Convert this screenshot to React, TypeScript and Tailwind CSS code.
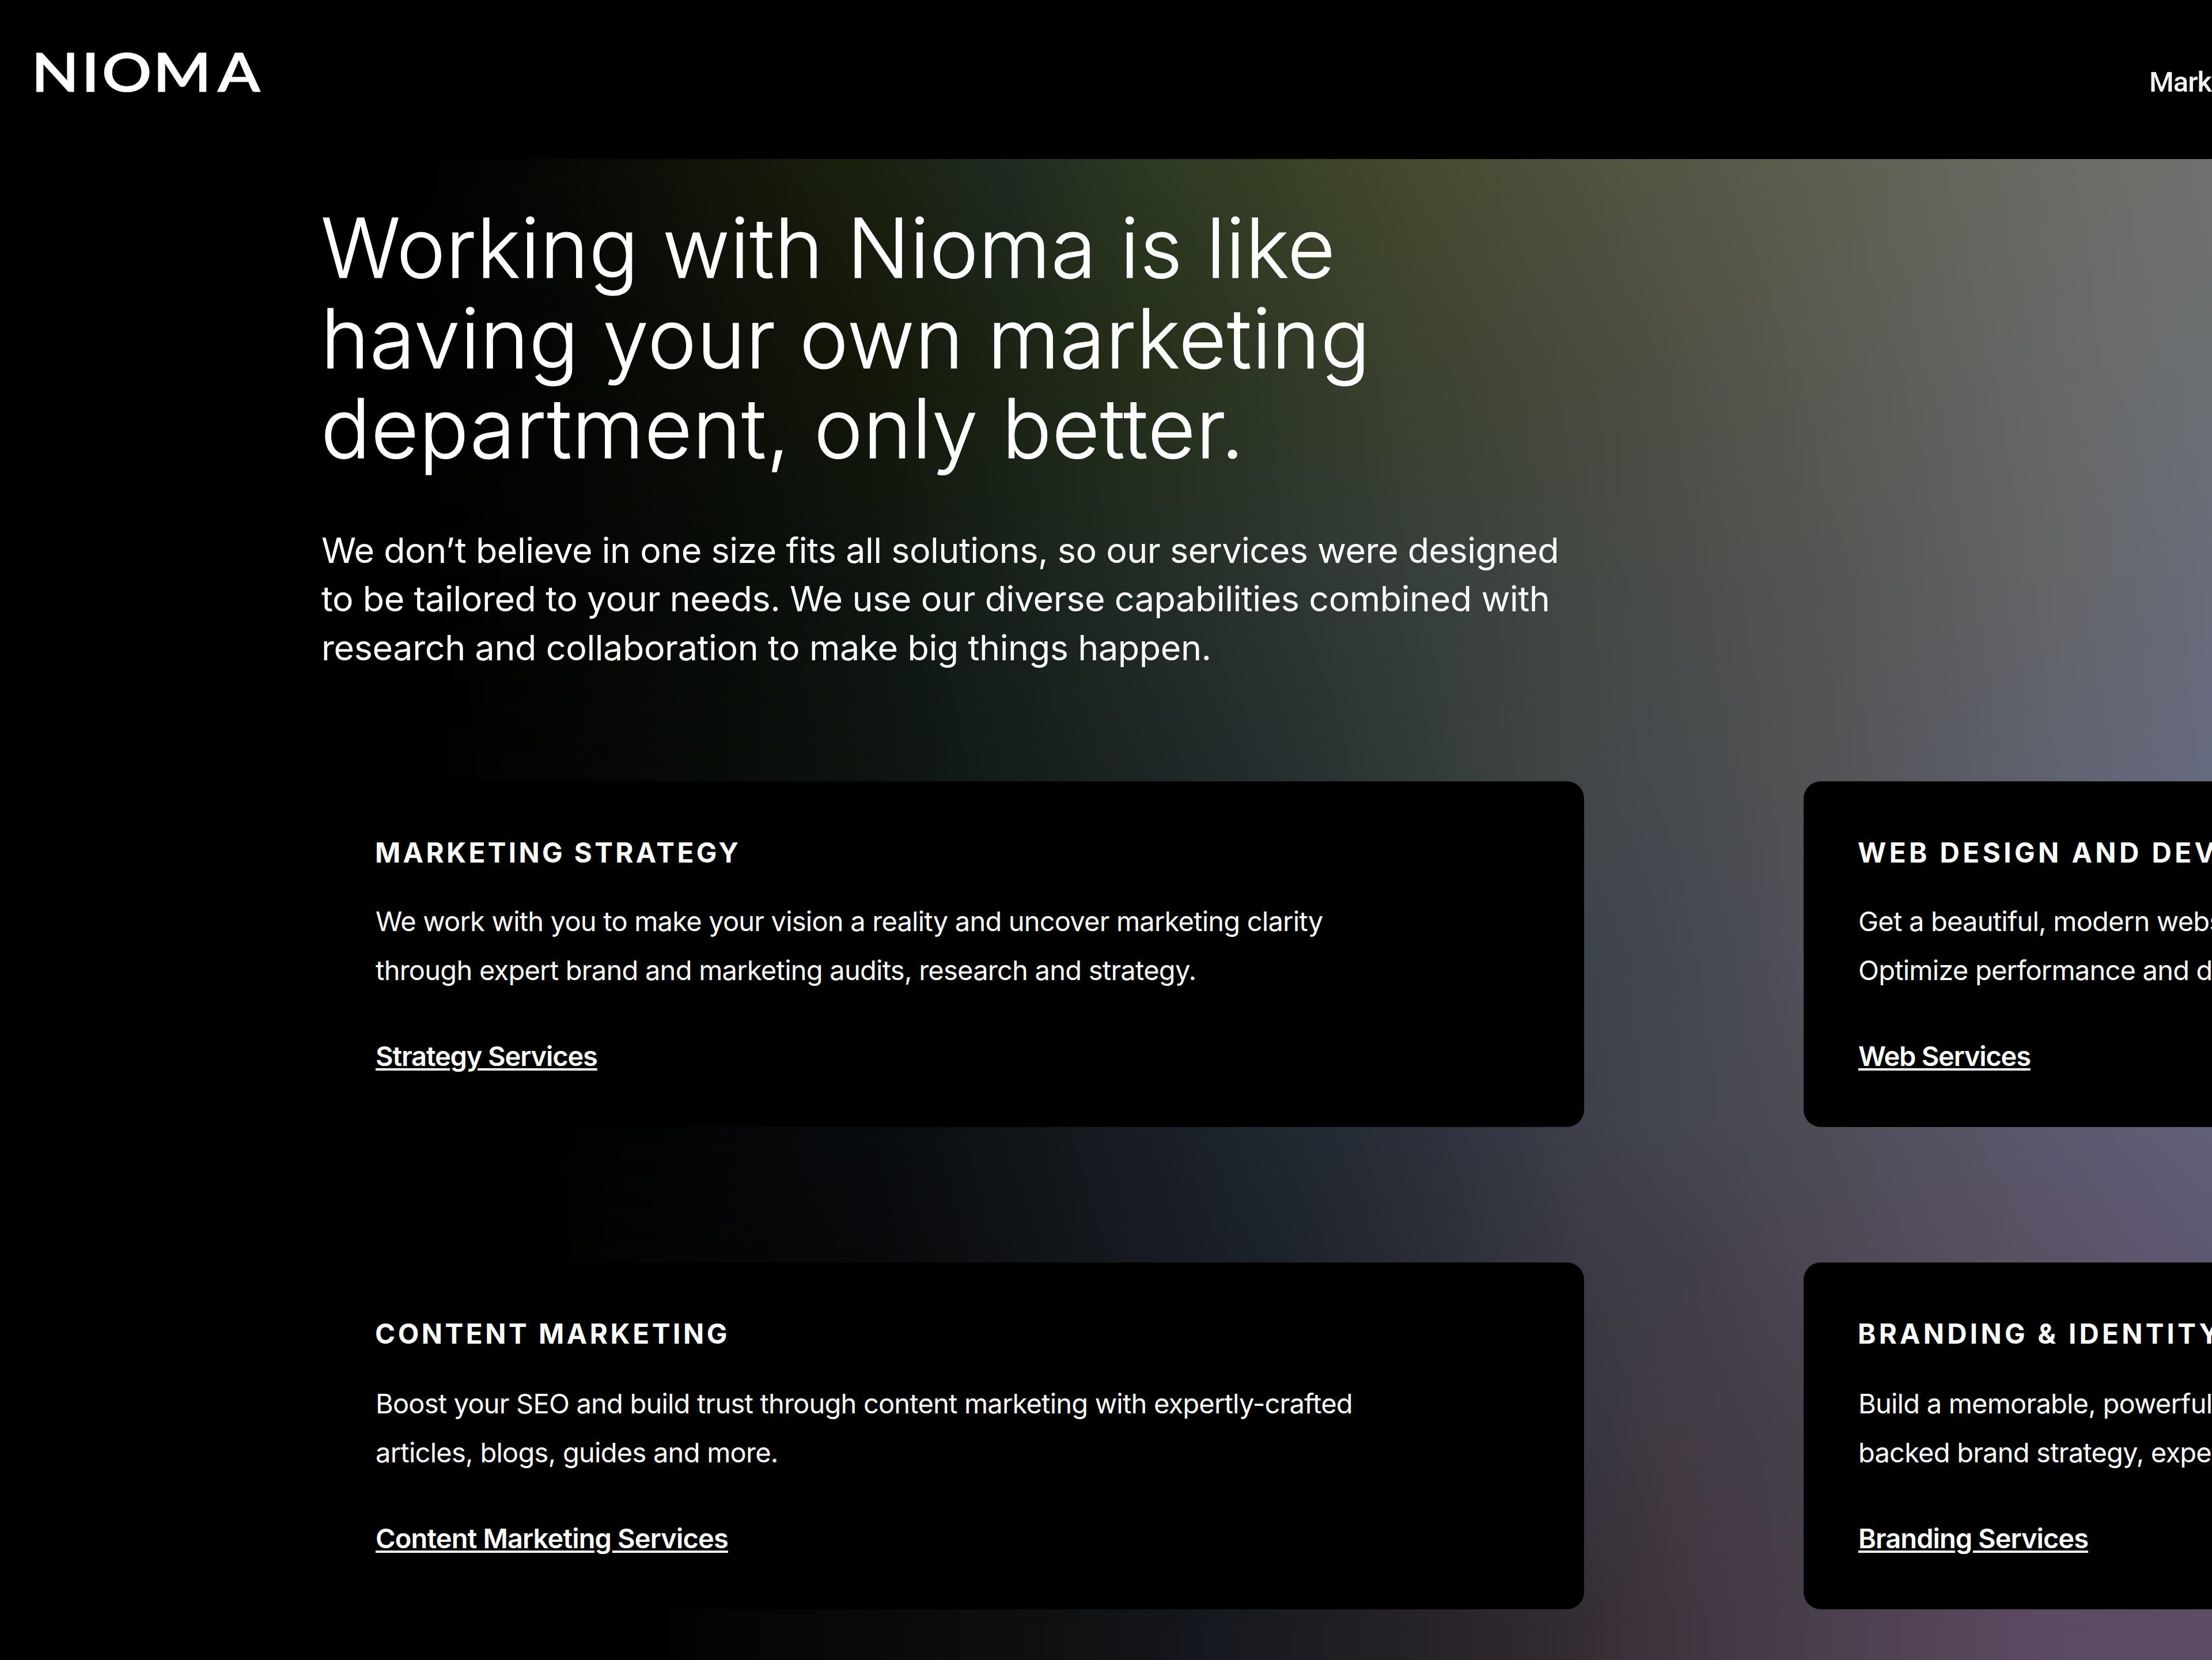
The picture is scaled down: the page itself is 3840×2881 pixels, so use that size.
type Line = { text: string; track: string };
type Service = { title: Line; body: Line[]; link: Line; spacing: string };

const headline: Line[] = [
  { text: "Working with Nioma is like", track: "tracking-[0.65px]" },
  { text: "having your own marketing", track: "tracking-[0.82px]" },
  { text: "department, only better.", track: "tracking-[0.8px]" },
];

const intro: Line[] = [
  { text: "We don’t believe in one size fits all solutions, so our services were designed", track: "tracking-[-0.49px]" },
  { text: "to be tailored to your needs. We use our diverse capabilities combined with", track: "tracking-[-0.44px]" },
  { text: "research and collaboration to make big things happen.", track: "tracking-[-0.4px]" },
];

const services: Service[] = [
  {
    title: { text: "MARKETING STRATEGY", track: "tracking-[4.36px]" },
    body: [
      { text: "We work with you to make your vision a reality and uncover marketing clarity", track: "tracking-[-0.79px]" },
      { text: "through expert brand and marketing audits, research and strategy.", track: "tracking-[-0.75px]" },
    ],
    link: { text: "Strategy Services", track: "tracking-[-1.12px]" },
    spacing: "mt-[47px]",
  },
  {
    title: { text: "WEB DESIGN AND DEV", track: "tracking-[5.45px]" },
    body: [
      { text: "Get a beautiful, modern webs", track: "tracking-[-0.78px]" },
      { text: "Optimize performance and d", track: "tracking-[-0.78px]" },
    ],
    link: { text: "Web Services", track: "tracking-[-1.2px]" },
    spacing: "mt-[47px]",
  },
  {
    title: { text: "CONTENT MARKETING", track: "tracking-[4.55px]" },
    body: [
      { text: "Boost your SEO and build trust through content marketing with expertly-crafted", track: "tracking-[-0.8px]" },
      { text: "articles, blogs, guides and more.", track: "tracking-[-0.74px]" },
    ],
    link: { text: "Content Marketing Services", track: "tracking-[-0.84px]" },
    spacing: "mt-[49px]",
  },
  {
    title: { text: "BRANDING & IDENTITY", track: "tracking-[5.25px]" },
    body: [
      { text: "Build a memorable, powerful", track: "tracking-[-0.78px]" },
      { text: "backed brand strategy, expe", track: "tracking-[-0.78px]" },
    ],
    link: { text: "Branding Services", track: "tracking-[-0.95px]" },
    spacing: "mt-[49px]",
  },
];

/* Rows of the backdrop: each has its height in the section and colour stops across it. */
const rows: { y: number; stops: [string, number][] }[] = [
  { y: 0, stops: [["#000000", 600], ["#020202", 740], ["#080a06", 1000], ["#12160a", 1240], ["#1b210f", 1500], ["#1f2b22", 1750], ["#2e3a22", 2000], ["#374026", 2200], ["#454a2f", 2450], ["#525440", 2800], ["#5f6052", 3200], ["#6b6c66", 3600], ["#70726f", 3840]] },
  { y: 364, stops: [["#000000", 600], ["#020202", 740], ["#060704", 1000], ["#0c0f08", 1240], ["#131709", 1500], ["#1b2414", 1750], ["#26301a", 2000], ["#2e3825", 2200], ["#3c432f", 2450], ["#4b4c40", 2800], ["#5b5b54", 3200], ["#686a6a", 3600], ["#6c6f72", 3840]] },
  { y: 724, stops: [["#000000", 640], ["#010101", 740], ["#050604", 1000], ["#080c08", 1240], ["#0e150f", 1500], ["#18221a", 1750], ["#222e26", 2000], ["#2b352f", 2200], ["#363f3a", 2450], ["#464a46", 2800], ["#565755", 3200], ["#656769", 3600], ["#686c7a", 3840]] },
  { y: 1074, stops: [["#000000", 700], ["#020202", 800], ["#050604", 1000], ["#080c08", 1240], ["#0d140f", 1500], ["#151d1b", 1750], ["#1d2626", 2000], ["#252e2f", 2200], ["#323a39", 2450], ["#404646", 2700], ["#454a4e", 2860], ["#505152", 3100], ["#616472", 3600], ["#666a7e", 3840]] },
  { y: 1384, stops: [["#000000", 850], ["#0a0d0e", 1500], ["#1b2227", 2000], ["#3e444b", 2760], ["#43474f", 2900], ["#50505a", 3130], ["#5e5c70", 3600], ["#64647c", 3840]] },
  { y: 1684, stops: [["#000000", 900], ["#020202", 960], ["#040505", 1200], ["#080b0e", 1500], ["#101315", 1700], ["#191e26", 2000], ["#20272f", 2200], ["#2b303a", 2450], ["#3e404a", 2750], ["#44464f", 2900], ["#4c4c54", 3130], ["#5a566a", 3500], ["#625f79", 3840]] },
  { y: 1914, stops: [["#000000", 960], ["#030302", 1000], ["#07080a", 1500], ["#111416", 1800], ["#171b23", 2000], ["#1c2229", 2200], ["#292c34", 2450], ["#3b3b45", 2750], ["#433f4a", 2950], ["#4d4652", 3130], ["#5a5063", 3500], ["#5f5872", 3840]] },
  { y: 2224, stops: [["#000000", 1080], ["#111216", 1900], ["#38363f", 2750], ["#423a43", 2900], ["#463f4a", 3130], ["#5b4c62", 3500], ["#5e516c", 3840]] },
  { y: 2550, stops: [["#000000", 1140], ["#030303", 1180], ["#080908", 1500], ["#0f0f0f", 1800], ["#15181e", 2100], ["#252227", 2450], ["#322a31", 2700], ["#3f353f", 2900], ["#483e4b", 3130], ["#5b4860", 3500], ["#5e4b66", 3840]] },
];

function Backdrop() {
  return (
    <div className="absolute inset-0" aria-hidden>
      {rows.map((row, i) => {
        const mask = i === 0 ? undefined : `linear-gradient(to bottom, transparent ${rows[i - 1].y}px, black ${row.y}px)`;
        return (
          <div
            key={row.y}
            className="absolute inset-0"
            style={{
              backgroundImage: `linear-gradient(to right, ${row.stops.map(([c, x]) => `${c} ${x}px`).join(", ")})`,
              maskImage: mask,
            }}
          />
        );
      })}
    </div>
  );
}

function Logo() {
  return (
    <svg className="h-[276px] w-[520px]" viewBox="0 0 520 276" aria-label="NIOMA">
      <text
        x="46.9 121.9 152.3 229.2 325.6"
        y="159"
        transform="scale(1.16 1)"
        fill="#ffffff"
        stroke="#ffffff"
        strokeWidth="0.9"
        className="font-['Lato',sans-serif] text-[93px] font-semibold"
      >
        NIOMA
      </text>
    </svg>
  );
}

function ServiceCard({ service }: { service: Service }) {
  return (
    <article className="h-full rounded-[30px] bg-black pl-[95px] pt-[94.5px]">
      <h2 className={`-ml-[1px] text-[47.5px] font-bold leading-[60px] ${service.title.track}`}>{service.title.text}</h2>
      <p className={`text-[47px] leading-[84.5px] ${service.spacing}`}>
        {service.body.map((line) => (
          <span key={line.text} className={`block ${line.track}`}>{line.text}</span>
        ))}
      </p>
      <a
        href="#"
        className={`mt-[77px] inline-block text-[47px] font-semibold leading-[60px] underline decoration-[4px] underline-offset-[4px] ${service.link.track}`}
      >
        {service.link.text}
      </a>
    </article>
  );
}

export default function App() {
  return (
    <div className="flex h-[2881px] w-[3840px] flex-col overflow-hidden whitespace-nowrap bg-black font-['Inter',sans-serif] text-white">
      <header className="flex h-[276px] shrink-0 justify-between bg-black">
        <Logo />
        <nav className="w-[109px] overflow-hidden pt-[113px]">
          <a href="#" className="font-['Roboto',sans-serif] text-[49px] font-medium leading-[60px] tracking-[-1px] text-[#f2f2f2]">Mark</a>
        </nav>
      </header>
      <main className="relative flex-1">
        <Backdrop />
        <div className="relative pl-[557px]">
          <h1 className="pt-[76px] text-[143px] font-light leading-[156.5px] [-webkit-text-stroke:1px_#ffffff]">
            {headline.map((line) => (
              <span key={line.text} className={`block ${line.track}`}>{line.text}</span>
            ))}
          </h1>
          <p className="mt-[91.5px] pl-px text-[61px] leading-[84.3px]">
            {intro.map((line) => (
              <span key={line.text} className={`block ${line.track}`}>{line.text}</span>
            ))}
          </p>
          <section className="mt-[190px] grid grid-cols-[2193px_2193px] grid-rows-[600px_602px] gap-x-[381px] gap-y-[235px]">
            {services.map((service) => (
              <ServiceCard key={service.title.text} service={service} />
            ))}
          </section>
        </div>
      </main>
    </div>
  );
}
